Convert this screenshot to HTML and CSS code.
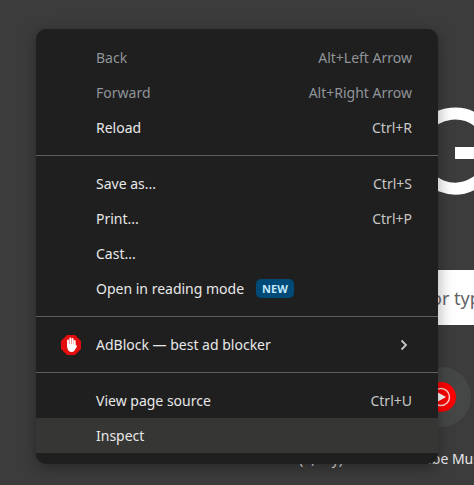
FILE: index.html
```html
<!DOCTYPE html>
<html lang="en">
<head>
<meta charset="utf-8">
<title>New Tab</title>
<link rel="stylesheet" href="styles.css">
</head>
<body>
<main class="page">
  <svg class="logo" viewBox="0 0 88 88" role="img" aria-label="Google">
    <path d="M70.500 17.500A37.500 37.500 0 1 0 81 50" fill="none" stroke="#fff" stroke-width="12"/>
    <rect x="44" y="40" width="43" height="12" fill="#fff"/>
  </svg>
  <input class="search" type="text" aria-label="Search" placeholder="Search Google or type a URL">
  <nav class="tiles">
    <a class="tile" href="#">
      <span class="disc"></span>
      <span>(1, my)</span>
    </a>
    <a class="tile" href="#">
      <span class="disc">
        <svg class="music" viewBox="0 0 30 30" aria-hidden="true">
          <circle cx="15" cy="15" r="15" fill="#f00"/>
          <circle cx="15" cy="15" r="8.500" fill="none" stroke="#ffd0d0" stroke-width="1.500"/>
          <path d="M12 10.500L20 15L12 19.500Z" fill="#fff"/>
        </svg>
      </span>
      <span>YouTube Music</span>
    </a>
  </nav>
</main>

<div class="menu" role="menu">
  <button class="item" role="menuitem" disabled><span>Back</span><kbd>Alt+Left Arrow</kbd></button>
  <button class="item" role="menuitem" disabled><span>Forward</span><kbd>Alt+Right Arrow</kbd></button>
  <button class="item" role="menuitem"><span>Reload</span><kbd>Ctrl+R</kbd></button>
  <hr>
  <button class="item" role="menuitem"><span>Save as...</span><kbd>Ctrl+S</kbd></button>
  <button class="item" role="menuitem"><span>Print...</span><kbd>Ctrl+P</kbd></button>
  <button class="item" role="menuitem"><span>Cast...</span></button>
  <button class="item" role="menuitem"><span>Open in reading mode</span><span class="badge">NEW</span></button>
  <hr>
  <button class="item with-icon" role="menuitem">
    <svg class="icon" viewBox="0 0 20 20" aria-hidden="true">
      <path d="M6 0H14L20 6V14L14 20H6L0 14V6Z" fill="#e40d0d"/>
      <path d="M7 11V5.500M9.300 10V3.500M11.600 10V4M13.700 11V6" stroke="#fff" stroke-width="1.900" stroke-linecap="round"/>
      <path d="M6 9H14.600V11L16 10.500Q16.500 10.700 16 11.500L13.500 15.500Q12.500 17 10.500 17Q8 17 7 15Q6 13 6 9Z" fill="#fff"/>
    </svg>
    <span>AdBlock — best ad blocker</span>
    <svg class="chevron" viewBox="0 0 8 12" aria-hidden="true">
      <path d="M1.500 1.500L6 6L1.500 10.500" fill="none" stroke="#c7c7c7" stroke-width="1.800"/>
    </svg>
  </button>
  <hr>
  <button class="item" role="menuitem"><span>View page source</span><kbd>Ctrl+U</kbd></button>
  <button class="item active" role="menuitem"><span>Inspect</span></button>
</div>
</body>
</html>
```
FILE: styles.css
```css
* {
  box-sizing: border-box;
}

body {
  margin: 0;
  min-height: 100vh;
  overflow: hidden;
  background: #3c3c3c;
  color: #e8eaed;
  font-family: "Noto Sans", "Open Sans", sans-serif;
  font-size: 14px;
}

.page {
  display: flex;
  flex-direction: column;
  padding-top: 107px;
  overflow: hidden;
}

.logo {
  width: 88px;
  height: 88px;
  margin-left: 411px;
}

.search {
  height: 55px;
  margin: 75px 0 42px 288px;
  padding: 0 0 0 16px;
  border: 0;
  background: #fff;
  color: #5f6368;
  font-family: inherit;
  font-size: 18px;
}

.search::placeholder {
  color: #5f6368;
}

.tiles {
  display: flex;
  margin-left: 261px;
}

.tile {
  display: flex;
  flex: 0 0 120px;
  flex-direction: column;
  align-items: center;
  gap: 22px;
  color: inherit;
  line-height: 20px;
  text-decoration: none;
  white-space: nowrap;
}

.disc {
  display: grid;
  place-items: center;
  width: 60px;
  height: 60px;
  border-radius: 50%;
  background: #444746;
}

.music {
  width: 30px;
  height: 30px;
}

.menu {
  position: absolute;
  top: 29px;
  left: 36px;
  right: 36px;
  padding: 11px 0;
  overflow: hidden;
  border-radius: 10px;
  background: #1f1f1f;
  box-shadow: 0 4px 16px rgba(0, 0, 0, 0.35);
}

.item {
  display: flex;
  align-items: center;
  width: 100%;
  height: 35px;
  padding: 0 26px 0 60px;
  border: 0;
  background: transparent;
  color: #e8e8e8;
  font: inherit;
  text-align: left;
}

.item:disabled {
  color: #8f9499;
}

.item.active {
  background: #363634;
}

.item kbd {
  margin-left: auto;
  color: #c7c7c7;
  font: inherit;
}

.item:disabled kbd {
  color: inherit;
}

.with-icon {
  padding-left: 25px;
}

.icon {
  width: 20px;
  height: 20px;
  margin-right: 15px;
}

.chevron {
  width: 8px;
  height: 12px;
  margin-left: auto;
  margin-right: 4px;
}

.badge {
  margin-left: 12px;
  padding: 0 6px;
  border-radius: 5px;
  background: #004a77;
  color: #c2e7ff;
  font-size: 11px;
  font-weight: 700;
  line-height: 19px;
}

hr {
  height: 1px;
  margin: 10px 0;
  border: 0;
  background: #5e5e5e;
}
```
